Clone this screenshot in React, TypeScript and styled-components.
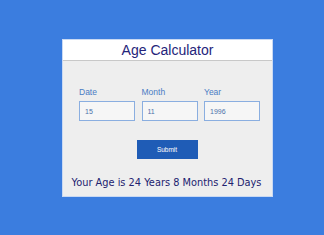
import React, { useState } from 'react'
import styled, { createGlobalStyle } from 'styled-components'

const Global = createGlobalStyle`
  html, body {
    margin: 0;
    padding: 0;
    background-color: #3b7ddf;
  }
  body {
    width: 324px;
    height: 235px;
    overflow: hidden;
    font-family: "Liberation Sans", Arial, sans-serif;
  }
`

const Page = styled.div`
  width: 324px;
  height: 235px;
  padding: 39px 0 0 62px;
  box-sizing: border-box;
`

const Card = styled.div`
  width: 211px;
  height: 158px;
  background-color: #eeeeee;
  border: 1px solid #c9d9f3;
  box-sizing: border-box;
  display: flex;
  flex-direction: column;
`

const Header = styled.div`
  height: 20px;
  background-color: #ffffff;
  border-bottom: 1px solid #c8c8c8;
  display: flex;
  align-items: center;
  justify-content: center;
  color: #24247a;
  font-size: 14px;
`

const Body = styled.div`
  flex: 1;
  padding: 26px 0 0 16px;
  display: flex;
  flex-direction: column;
`

const Fields = styled.div`
  display: grid;
  grid-template-columns: 56px 56px 56px;
  column-gap: 6.5px;
`

const Field = styled.div`
  display: flex;
  flex-direction: column;
`

const Label = styled.label`
  font-size: 8.5px;
  color: #4a7cc4;
  height: 10px;
  line-height: 10px;
  margin-bottom: 4px;
`

const Input = styled.input`
  width: 56px;
  height: 20px;
  box-sizing: border-box;
  border: 1.5px solid #8aaee0;
  background-color: #f6f6f6;
  padding: 0 0 0 5px;
  font-family: "Liberation Sans", Arial, sans-serif;
  font-size: 7px;
  color: #4d72aa;
  outline: none;
`

const Button = styled.button`
  align-self: center;
  margin: 19px 0 0 -17px;
  width: 61px;
  height: 19px;
  border: none;
  background-color: #1f5cb6;
  color: #ffffff;
  font-family: "Liberation Sans", Arial, sans-serif;
  font-size: 6.5px;
  padding: 0;
`

const Result = styled.div`
  margin: 18px 0 0 -18px;
  text-align: center;
  font-family: "DejaVu Sans", Verdana, sans-serif;
  font-size: 9.8px;
  color: #22226e;
`

export default function App() {
  const [date, setDate] = useState('15')
  const [month, setMonth] = useState('11')
  const [year, setYear] = useState('1996')

  return (
    <Page>
      <Global />
      <Card>
        <Header>Age Calculator</Header>
        <Body>
          <Fields>
            <Field>
              <Label>Date</Label>
              <Input value={date} onChange={e => setDate(e.target.value)} />
            </Field>
            <Field>
              <Label>Month</Label>
              <Input value={month} onChange={e => setMonth(e.target.value)} />
            </Field>
            <Field>
              <Label>Year</Label>
              <Input value={year} onChange={e => setYear(e.target.value)} />
            </Field>
          </Fields>
          <Button>Submit</Button>
          <Result>Your Age is 24 Years 8 Months 24 Days</Result>
        </Body>
      </Card>
    </Page>
  )
}
